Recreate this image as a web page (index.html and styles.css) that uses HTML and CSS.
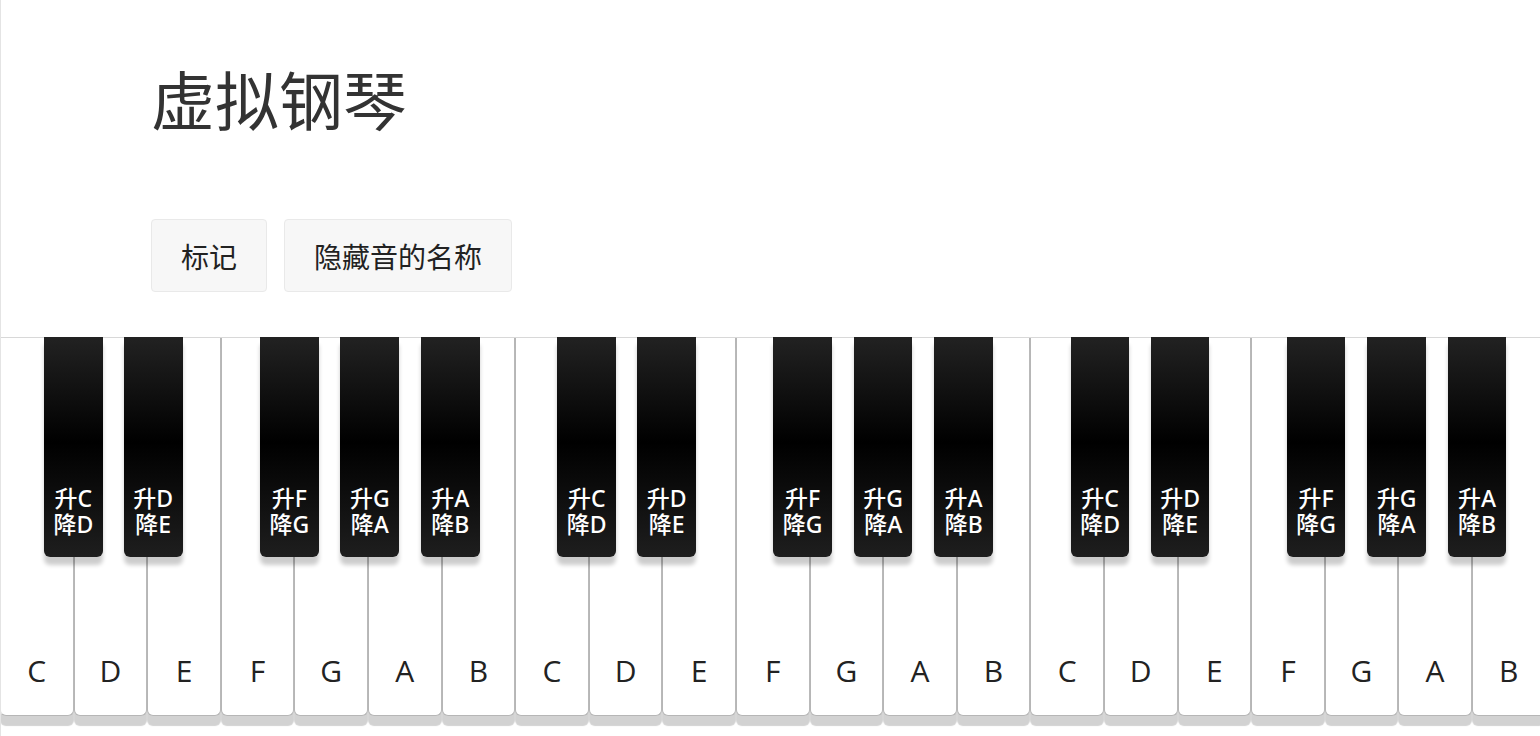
FILE: index.html
```html
<!DOCTYPE html>
<html lang="zh">
<head>
<meta charset="utf-8">
<title>虚拟钢琴</title>
<link rel="stylesheet" href="styles.css">
</head>
<body>
<div class="page">
  <header class="top">
    <h1 class="title">虚拟钢琴</h1>
    <div class="controls">
      <button class="btn">标记</button>
      <button class="btn">隐藏音的名称</button>
    </div>
  </header>
  <div class="piano">
    <div class="whites">
      <div class="white"><span class="note">C</span></div>
      <div class="white"><span class="note">D</span></div>
      <div class="white"><span class="note">E</span></div>
      <div class="white"><span class="note">F</span></div>
      <div class="white"><span class="note">G</span></div>
      <div class="white"><span class="note">A</span></div>
      <div class="white"><span class="note">B</span></div>
      <div class="white"><span class="note">C</span></div>
      <div class="white"><span class="note">D</span></div>
      <div class="white"><span class="note">E</span></div>
      <div class="white"><span class="note">F</span></div>
      <div class="white"><span class="note">G</span></div>
      <div class="white"><span class="note">A</span></div>
      <div class="white"><span class="note">B</span></div>
      <div class="white"><span class="note">C</span></div>
      <div class="white"><span class="note">D</span></div>
      <div class="white"><span class="note">E</span></div>
      <div class="white"><span class="note">F</span></div>
      <div class="white"><span class="note">G</span></div>
      <div class="white"><span class="note">A</span></div>
      <div class="white"><span class="note">B</span></div>
    </div>
    <div class="blacks">
      <div class="black cs first"><span class="bl">升C<br>降D</span></div>
      <div class="black ds"><span class="bl">升D<br>降E</span></div>
      <div class="black fs"><span class="bl">升F<br>降G</span></div>
      <div class="black gs"><span class="bl">升G<br>降A</span></div>
      <div class="black as"><span class="bl">升A<br>降B</span></div>
      <div class="black cs"><span class="bl">升C<br>降D</span></div>
      <div class="black ds"><span class="bl">升D<br>降E</span></div>
      <div class="black fs"><span class="bl">升F<br>降G</span></div>
      <div class="black gs"><span class="bl">升G<br>降A</span></div>
      <div class="black as"><span class="bl">升A<br>降B</span></div>
      <div class="black cs"><span class="bl">升C<br>降D</span></div>
      <div class="black ds"><span class="bl">升D<br>降E</span></div>
      <div class="black fs"><span class="bl">升F<br>降G</span></div>
      <div class="black gs"><span class="bl">升G<br>降A</span></div>
      <div class="black as"><span class="bl">升A<br>降B</span></div>
    </div>
  </div>
</div>
</body>
</html>
```

FILE: styles.css
```css
html, body {
  margin: 0;
  padding: 0;
  background: #fff;
  overflow: hidden;
}

body {
  font-family: "Open Sans", "Noto Sans CJK SC", sans-serif;
  color: #222;
}

.page {
  width: 1540px;
  height: 736px;
  box-sizing: border-box;
  border-left: 1px solid #e4e4e4;
  overflow: hidden;
}

.top {
  padding: 65px 0 0 150px;
  height: 272px;
  box-sizing: border-box;
}

.title {
  margin: 0;
  font-family: "Noto Sans CJK SC", sans-serif;
  font-weight: 400;
  font-size: 64px;
  line-height: 64px;
  color: #333;
}

.controls {
  display: flex;
  gap: 17px;
  margin-top: 90px;
}

.btn {
  font-family: "Noto Sans CJK SC", sans-serif;
  font-size: 28px;
  line-height: 28px;
  color: #222;
  background: #f7f7f7;
  border: 1px solid #e9e9e9;
  border-radius: 4px;
  padding: 21.5px 29px;
  margin: 0;
}

.piano {
  position: relative;
  margin-left: -1px;
  margin-top: 65px;
  border-top: 1px solid #d8d8d8;
}

.whites {
  display: flex;
}

.white {
  flex: 0 0 73.6px;
  box-sizing: border-box;
  height: 378px;
  background: #fff;
  border: 1px solid #b6b6b6;
  border-top: none;
  border-radius: 0 0 6px 6px;
  box-shadow: 0 10px 1px #d2d2d2;
  display: flex;
  flex-direction: column;
  justify-content: flex-end;
  align-items: center;
  padding-bottom: 29px;
}

.white:first-child {
  border-left-color: #e4e4e4;
}

.note {
  font-size: 30px;
  line-height: 30px;
  color: #222;
}

.blacks {
  position: absolute;
  top: -1px;
  left: 0;
  display: flex;
}

.black {
  flex: 0 0 58.6px;
  height: 220px;
  box-sizing: border-box;
  border-radius: 0 0 6px 6px;
  background: linear-gradient(to bottom, #222 0%, #000 48%, #1e1e1e 100%);
  box-shadow: 0 8px 4px rgba(0, 0, 0, 0.2);
  display: flex;
  flex-direction: column;
  justify-content: flex-end;
  align-items: center;
  padding-bottom: 20px;
}

.bl {
  display: block;
  text-align: center;
  color: #fff;
  font-family: "Noto Sans", "Noto Sans CJK SC", sans-serif;
  font-weight: 500;
  font-size: 23px;
  line-height: 26px;
  white-space: nowrap;
}

.black.first { margin-left: 44px; }
.black.cs { margin-left: 77.9px; }
.black.cs.first { margin-left: 44px; }
.black.ds { margin-left: 21.4px; }
.black.fs { margin-left: 77.4px; }
.black.gs { margin-left: 21.9px; }
.black.as { margin-left: 21.9px; }
```
